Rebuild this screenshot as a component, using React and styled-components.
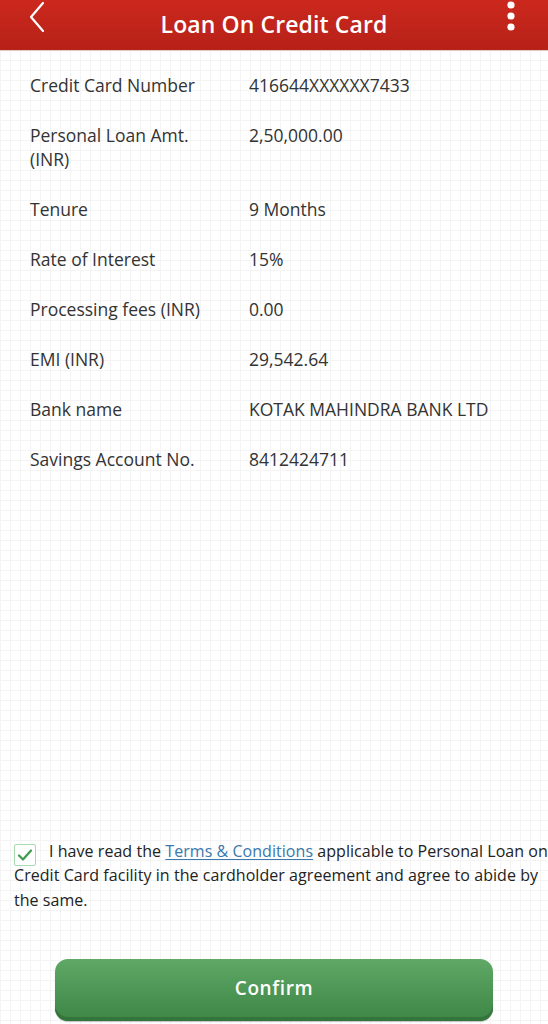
import styled, { createGlobalStyle } from 'styled-components';

const GlobalStyle = createGlobalStyle`
    html, body {
        margin: 0;
        padding: 0;
    }
    body {
        font-family: "Open Sans", "Noto Sans", Arial, sans-serif;
        color: #333;
    }
    * { box-sizing: border-box; }
`;

const details = [
    ['Credit Card Number', '416644XXXXXX7433'],
    ['Personal Loan Amt. (INR)', '2,50,000.00'],
    ['Tenure', '9 Months'],
    ['Rate of Interest', '15%'],
    ['Processing fees (INR)', '0.00'],
    ['EMI (INR)', '29,542.64'],
    ['Bank name', 'KOTAK MAHINDRA BANK LTD'],
    ['Savings Account No.', '8412424711'],
];

export default function App() {
    return (
        <Page>
            <GlobalStyle />
            <Header>
                <IconButton aria-label="Back">
                    <svg width="18" height="32" viewBox="0 0 18 32">
                        <path d="M15 2 L3 16 L15 30" fill="none" stroke="#fff" strokeWidth="2.2" strokeLinecap="round" strokeLinejoin="round" />
                    </svg>
                </IconButton>
                <Title>Loan On Credit Card</Title>
                <IconButton aria-label="More">
                    <svg width="10" height="34" viewBox="0 0 10 34">
                        <circle cx="5" cy="5" r="3.6" fill="#fff" />
                        <circle cx="5" cy="16" r="3.6" fill="#fff" />
                        <circle cx="5" cy="27" r="3.6" fill="#fff" />
                    </svg>
                </IconButton>
            </Header>

            <DetailList>
                {details.map(([label, value]) => (
                    <Row key={label}>
                        <Label>{label}</Label>
                        <Value>{value}</Value>
                    </Row>
                ))}
            </DetailList>

            <Terms>
                <Check>
                    <svg width="16" height="14" viewBox="0 0 16 14">
                        <path d="M2 7.5 L6 11.5 L14 2.5" fill="none" stroke="#3f9a4f" strokeWidth="2.2" strokeLinecap="round" strokeLinejoin="round" />
                    </svg>
                </Check>
                I have read the <TermsLink href="#">Terms &amp; Conditions</TermsLink> applicable to Personal Loan on Credit Card facility in the cardholder agreement and agree to abide by the same.
            </Terms>

            <ConfirmButton>Confirm</ConfirmButton>
        </Page>
    );
}

const Page = styled.div`
    width: 100%;
    height: 100vh;
    display: flex;
    flex-direction: column;
    overflow: hidden;
    background-color: #fff;
    background-image:
        linear-gradient(to right, #f4f4f4 1px, transparent 1px),
        linear-gradient(to bottom, #f4f4f4 1px, transparent 1px);
    background-size: 10px 10px;
`;

const Header = styled.header`
    height: 51px;
    flex-shrink: 0;
    display: flex;
    align-items: center;
    justify-content: space-between;
    padding: 0 26px 0 26px;
    background: linear-gradient(to bottom, #cc281d, #b62118);
    border-bottom: 1px solid #e9c9c6;
`;

const IconButton = styled.span`
    display: flex;
    align-items: center;
    justify-content: center;
    width: 22px;
    height: 51px;
    margin-top: -16px;
`;

const Title = styled.h1`
    margin: 0;
    color: #fff;
    font-size: 23px;
    font-weight: 600;
    letter-spacing: 0.1px;
    margin-top: -3px;
`;

const DetailList = styled.div`
    flex: 1;
    padding: 9px 10px 0 30px;
`;

const Row = styled.div`
    display: grid;
    grid-template-columns: 219px 1fr;
    padding: 13px 0;
    font-size: 17.5px;
    line-height: 24px;
    color: #333;
`;

const Label = styled.div`
    padding-right: 36px;
`;

const Value = styled.div``;

const Terms = styled.p`
    margin: 0;
    padding: 0 0 0 14px;
    font-size: 16px;
    line-height: 24.5px;
    letter-spacing: 0.05px;
    color: #222;
`;

const Check = styled.span`
    display: inline-flex;
    align-items: center;
    justify-content: center;
    width: 22px;
    height: 22px;
    margin: -6px 13px -6px 0;
    border: 1.5px solid #a9d9b2;
    border-radius: 2px;
    background: #fff;
    vertical-align: -5px;
`;

const TermsLink = styled.a`
    color: #3a78ad;
    text-decoration: underline;
    text-underline-offset: 2px;
`;

const ConfirmButton = styled.button`
    flex-shrink: 0;
    align-self: center;
    width: 438px;
    height: 62px;
    margin: 47px 0 3px 0;
    border: none;
    border-radius: 13px;
    background: linear-gradient(to bottom, #5fa865, #4a9352 60%, #3f8647);
    box-shadow: inset 0 -4px 0 #33753b, 0 1px 1px rgba(0,0,0,0.25);
    color: #fff;
    font-family: "Open Sans", "Noto Sans", Arial, sans-serif;
    font-size: 19px;
    font-weight: 600;
    letter-spacing: 0.6px;
    padding-bottom: 6px;
`;
